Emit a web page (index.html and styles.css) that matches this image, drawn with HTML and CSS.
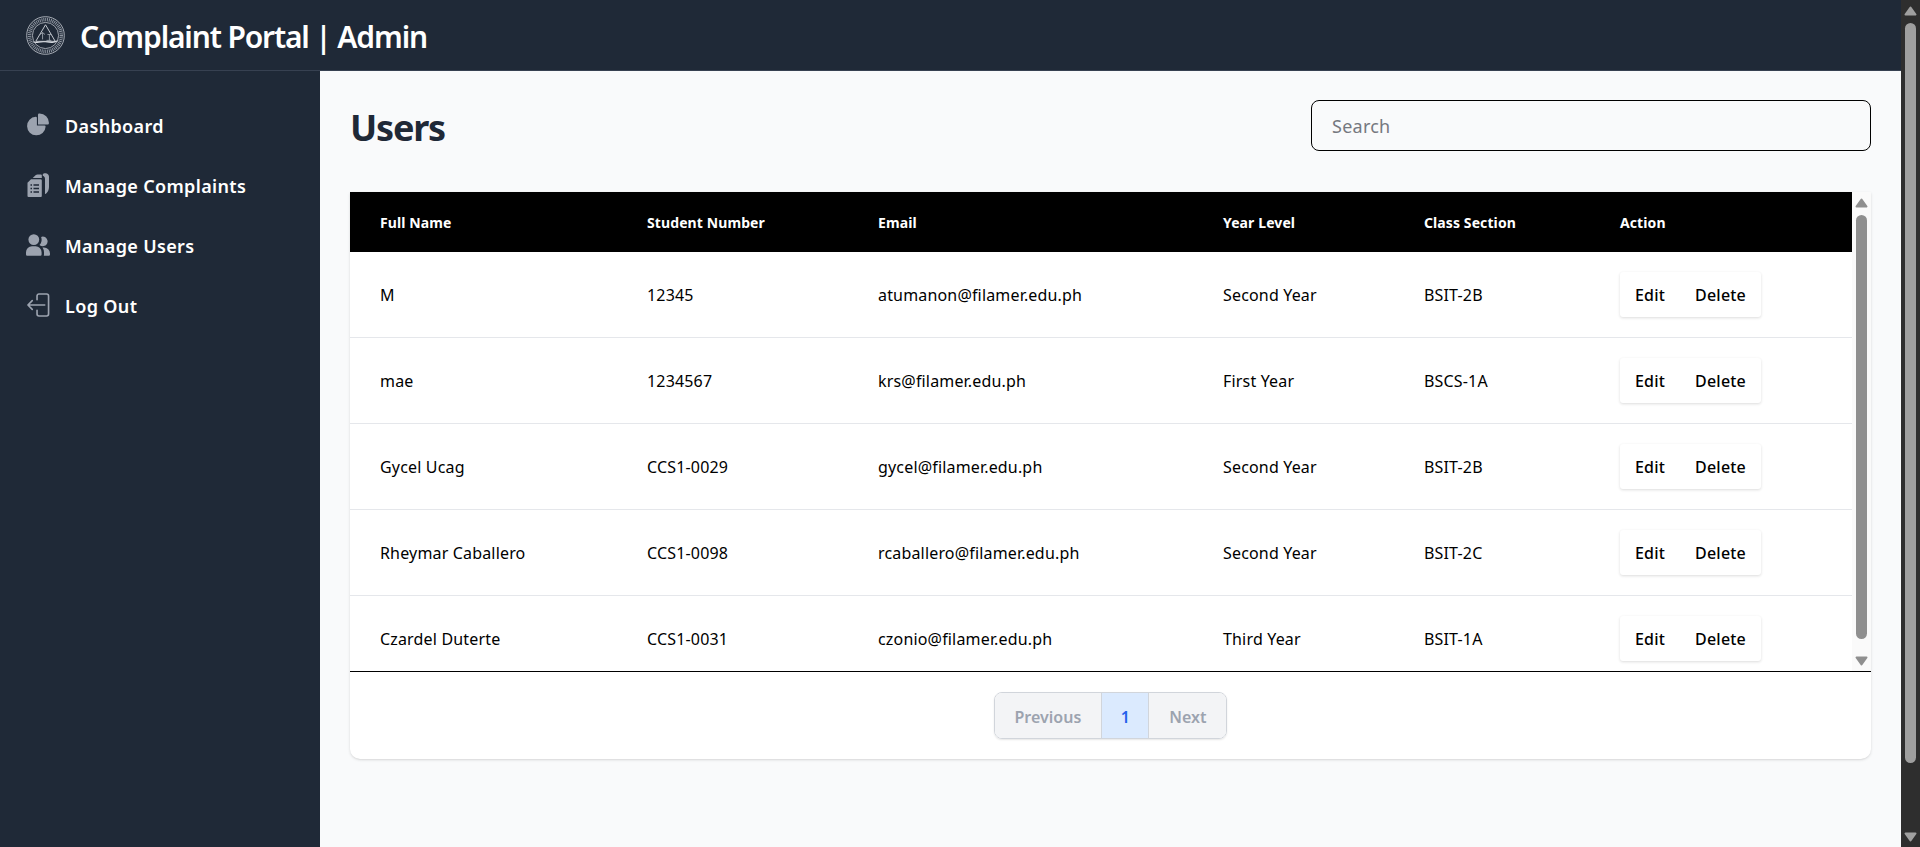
FILE: index.html
```html
<!DOCTYPE html>
<html lang="en">
<head>
<meta charset="utf-8">
<title>Complaint Portal | Admin</title>
<link rel="stylesheet" href="styles.css">
</head>
<body>
<div class="app">
  <header class="topbar">
    <svg class="logo" viewBox="0 0 40 40" aria-hidden="true">
      <circle cx="20" cy="20" r="19.300" fill="none" stroke="#b9bec6" stroke-width=".9"/>
      <circle cx="20" cy="20" r="16.300" fill="none" stroke="#8f96a1" stroke-width="3.600" stroke-dasharray="1 .9"/>
      <circle cx="20" cy="20" r="13.400" fill="none" stroke="#c4c8cf" stroke-width=".8"/>
      <path d="M20 9 30 26H10Z" fill="none" stroke="#c9cdd4" stroke-width="1"/>
      <path d="M17 24v-7M17 17l-2.500 2M17 17l2.500 2M22 19h4M24 19v6M21 25h5" fill="none" stroke="#aeb4bd" stroke-width=".8"/>
      <path d="M7.500 26.500c4 2 6-1 12.500 0s8 1 12.500-1" fill="none" stroke="#d5d9df" stroke-width="1.100"/>
    </svg>
    <span class="brand">Complaint Portal | Admin</span>
  </header>
  <div class="body-row">
    <aside class="sidebar">
      <a class="nav-item">
        <svg class="nav-icon" viewBox="0 0 22 21" aria-hidden="true"><path class="fill" d="M16.975 11H10V4.025a1 1 0 0 0-1.066-.998 8.5 8.5 0 1 0 9.039 9.039.999.999 0 0 0-1-1.066h.002Z"/><path class="fill" d="M12.5 0c-.157 0-.311.01-.565.027A1 1 0 0 0 11 1.02V10h8.975a1 1 0 0 0 1-.935c.013-.188.028-.374.028-.565A8.51 8.51 0 0 0 12.5 0Z"/></svg>
        <span>Dashboard</span>
      </a>
      <a class="nav-item">
        <svg class="nav-icon" viewBox="0 0 23 24" aria-hidden="true"><path class="fill" d="M4.500 6.200H14a1.300 1.300 0 0 1 1.300 1.300V23a1 1 0 0 1-1 1H2a1 1 0 0 1-1-1V9.700Z"/><path class="cut" d="M4 12h1.500M7 12h5.500M4 15.500h1.500M7 15.500h5.500M4 19h1.500M7 19h5.500"/><path class="fill" d="M6.200 5 9 2.200C9.600 1.600 10.300 1.400 11 1.400h3.200c.7 0 1.100.5 1.100 1.100V5Z"/><path class="fill" d="M16.300 1.200c.5-.7 2-1.200 3.200-.9 1.800.4 3 1.700 3 3.500V14c0 2.800-1.200 5.300-3.300 7-.3.200-.7 0-.7-.4V6c0-1.600-.7-2.700-2.200-3.200Z"/></svg>
        <span>Manage Complaints</span>
      </a>
      <a class="nav-item">
        <svg class="nav-icon" viewBox="0 0 20 18" aria-hidden="true"><path class="fill" d="M14 2a3.963 3.963 0 0 0-1.400.267 6.439 6.439 0 0 1-1.331 6.638A4 4 0 1 0 14 2Zm1 9h-1.264A6.957 6.957 0 0 1 15 15v2a2.970 2.970 0 0 1-.184 1H19a1 1 0 0 0 1-1v-1a5.006 5.006 0 0 0-5-5ZM6.500 9a4.500 4.500 0 1 0 0-9 4.500 4.500 0 0 0 0 9ZM8 10H5a5.006 5.006 0 0 0-5 5v2a1 1 0 0 0 1 1h11a1 1 0 0 0 1-1v-2a5.006 5.006 0 0 0-5-5Z"/></svg>
        <span>Manage Users</span>
      </a>
      <a class="nav-item">
        <svg class="nav-icon" viewBox="0 0 24 25" aria-hidden="true"><path class="line" d="M11 7V3a2 2 0 0 1 2-2h8a2 2 0 0 1 2 2v19a2 2 0 0 1-2 2h-8a2 2 0 0 1-2-2v-4"/><path class="line" d="M19 12.500H1.500M6 8 1.500 12.500 6 17"/></svg>
        <span>Log Out</span>
      </a>
    </aside>
    <main class="content">
      <div class="page-head">
        <h1 class="page-title">Users</h1>
        <input class="search" type="text" placeholder="Search">
      </div>
      <section class="card">
        <div class="table-wrap">
          <div class="table-clip">
            <table class="users">
              <colgroup>
                <col class="c-name"><col class="c-num"><col class="c-mail"><col class="c-year"><col class="c-sec"><col class="c-act">
              </colgroup>
              <thead>
                <tr><th>Full Name</th><th>Student Number</th><th>Email</th><th>Year Level</th><th>Class Section</th><th>Action</th></tr>
              </thead>
              <tbody>
                <tr><td>M</td><td>12345</td><td>atumanon@filamer.edu.ph</td><td>Second Year</td><td>BSIT-2B</td><td><div class="actions"><button class="act">Edit</button><button class="act">Delete</button></div></td></tr>
                <tr><td>mae</td><td>1234567</td><td>krs@filamer.edu.ph</td><td>First Year</td><td>BSCS-1A</td><td><div class="actions"><button class="act">Edit</button><button class="act">Delete</button></div></td></tr>
                <tr><td>Gycel Ucag</td><td>CCS1-0029</td><td>gycel@filamer.edu.ph</td><td>Second Year</td><td>BSIT-2B</td><td><div class="actions"><button class="act">Edit</button><button class="act">Delete</button></div></td></tr>
                <tr><td>Rheymar Caballero</td><td>CCS1-0098</td><td>rcaballero@filamer.edu.ph</td><td>Second Year</td><td>BSIT-2C</td><td><div class="actions"><button class="act">Edit</button><button class="act">Delete</button></div></td></tr>
                <tr><td>Czardel Duterte</td><td>CCS1-0031</td><td>czonio@filamer.edu.ph</td><td>Third Year</td><td>BSIT-1A</td><td><div class="actions"><button class="act">Edit</button><button class="act">Delete</button></div></td></tr>
              </tbody>
            </table>
          </div>
          <div class="vbar vbar-inner">
            <div class="vbar-btn up"><svg class="arrow" viewBox="0 0 13 10" aria-hidden="true"><path d="M6.500 1.500 11.500 8.500H1.500Z"/></svg></div>
            <div class="vbar-track"><div class="vbar-thumb"></div></div>
            <div class="vbar-btn down"><svg class="arrow" viewBox="0 0 13 10" aria-hidden="true"><path d="M1.500 1.500H11.500L6.500 8.500Z"/></svg></div>
          </div>
        </div>
        <div class="pager-row">
          <nav class="pager">
            <span class="page-btn">Previous</span>
            <span class="page-btn current">1</span>
            <span class="page-btn">Next</span>
          </nav>
        </div>
      </section>
    </main>
  </div>
</div>
<div class="vbar vbar-page">
  <div class="vbar-btn up"><svg class="arrow" viewBox="0 0 13 10" aria-hidden="true"><path d="M6.500 1.500 11.500 8.500H1.500Z"/></svg></div>
  <div class="vbar-track"><div class="vbar-thumb"></div></div>
  <div class="vbar-btn down"><svg class="arrow" viewBox="0 0 13 10" aria-hidden="true"><path d="M1.500 1.500H11.500L6.500 8.500Z"/></svg></div>
</div>
</body>
</html>
```

FILE: styles.css
```css
* { box-sizing: border-box; }

html { background: #f9fafb; }

body {
  display: flex;
  height: 847px;
  margin: 0;
  overflow: hidden;
  font-family: "Noto Sans", "Open Sans", "Liberation Sans", sans-serif;
  color: #000;
}

.app {
  display: flex;
  flex: 1;
  flex-direction: column;
  min-width: 0;
}

/* scrollbars */
.vbar {
  display: flex;
  flex: none;
  flex-direction: column;
  width: 19px;
}

.vbar-btn {
  display: flex;
  flex: none;
  justify-content: center;
  height: 19px;
}
.vbar-btn.up { padding-top: 6px; }
.vbar-btn.down { padding-top: 4px; }

.arrow { display: block; width: 13px; height: 10px; }
.arrow path { stroke-width: 2; stroke-linejoin: round; }

.vbar-track { flex: 1; padding: 4px; min-height: 0; }
.vbar-thumb { border-radius: 6px; }

.vbar-page { background: #2e2e2e; }
.vbar-page .arrow path { fill: #9f9f9f; stroke: #9f9f9f; }
.vbar-page .vbar-thumb { height: 740px; background: #9f9f9f; }

.vbar-inner { background: #fafafa; }
.vbar-inner .arrow path { fill: #8f8f8f; stroke: #8f8f8f; }
.vbar-inner .vbar-thumb { height: 424px; background: #8f8f8f; }

/* top bar */
.topbar {
  display: flex;
  flex: none;
  align-items: center;
  gap: 15px;
  height: 71px;
  padding-left: 26px;
  background: #1f2937;
  border-bottom: 1px solid #374151;
}

.logo { width: 39px; height: 39px; flex: none; }

.brand {
  padding-top: 3px;
  color: #fff;
  font-size: 30px;
  font-weight: 600;
  line-height: 36px;
  letter-spacing: -1.15px;
}

.body-row { display: flex; flex: 1; min-height: 0; }

/* sidebar */
.sidebar {
  width: 320px;
  flex: none;
  padding-top: 24px;
  background: #1f2937;
}

.nav-item {
  display: flex;
  align-items: center;
  gap: 15px;
  height: 60px;
  padding-left: 26px;
  color: #fff;
  font-size: 18px;
  font-weight: 600;
  letter-spacing: .35px;
}
.nav-item span { padding-top: 2px; }

.nav-icon { width: 24px; height: 24px; flex: none; }
.nav-icon .fill { fill: #9ca3af; }
.nav-icon .cut { fill: none; stroke: #1f2937; stroke-width: 1.600; }
.nav-icon .line {
  fill: none;
  stroke: #9ca3af;
  stroke-width: 1.700;
  stroke-linecap: round;
  stroke-linejoin: round;
}

/* main */
.content {
  flex: 1;
  min-width: 0;
  padding: 29px 30px 0;
  background: #f9fafb;
}

.page-head {
  display: flex;
  align-items: center;
  justify-content: space-between;
  height: 51px;
  margin-bottom: 41px;
}

.page-title {
  margin: 0;
  padding-top: 4px;
  color: #1f2937;
  font-size: 36px;
  font-weight: 700;
  line-height: 40px;
  letter-spacing: -1.2px;
}

.search {
  width: 560px;
  height: 51px;
  padding: 0 20px;
  background: transparent;
  border: 1px solid #000;
  border-radius: 8px;
  font: inherit;
  font-size: 18px;
  letter-spacing: .25px;
  outline: none;
}
.search::placeholder { color: #75787f; }

.card {
  background: #fff;
  border-radius: 0 0 10px 10px;
  box-shadow: 0 1px 3px rgba(0, 0, 0, .12), 0 1px 2px -1px rgba(0, 0, 0, .1);
}

.table-wrap {
  display: flex;
  height: 480px;
  border-bottom: 1px solid #000;
}

.table-clip {
  flex: 1;
  min-width: 0;
  overflow: hidden;
}

.users {
  width: 100%;
  table-layout: fixed;
  border-collapse: collapse;
}

.c-name { width: 267px; }
.c-num { width: 231px; }
.c-mail { width: 345px; }
.c-year { width: 201px; }
.c-sec { width: 196px; }

.users th {
  height: 60px;
  padding: 0 30px;
  background: #000;
  color: #fff;
  font-size: 14px;
  font-weight: 700;
  letter-spacing: .1px;
  text-align: left;
}

.users td {
  padding: 20px 30px;
  font-size: 16px;
  line-height: 24px;
  letter-spacing: .17px;
  white-space: nowrap;
}

.users tbody tr { border-bottom: 1px solid #e5e7eb; }

.actions {
  display: inline-flex;
  vertical-align: top;
  background: #fff;
  border-radius: 3px;
  box-shadow: 0 1px 3px rgba(0, 0, 0, .14);
}

.act {
  height: 45px;
  padding: 0 15px;
  background: transparent;
  border: 0;
  color: #000;
  font: inherit;
  font-size: 16px;
  font-weight: 500;
  letter-spacing: .2px;
}

.pager-row {
  display: flex;
  justify-content: center;
  padding: 20px 0;
}

.pager {
  display: flex;
  overflow: hidden;
  height: 47px;
  border: 1px solid #d1d5db;
  border-radius: 8px;
  box-shadow: 0 1px 2px rgba(0, 0, 0, .1);
  font-size: 16px;
  font-weight: 600;
  line-height: 49px;
}

.page-btn {
  padding: 0 20px;
  background: #f3f4f6;
  color: #9ca3af;
}

.page-btn.current {
  width: 48px;
  padding: 0;
  background: #dbeafe;
  color: #2563eb;
  border-left: 1px solid #d1d5db;
  border-right: 1px solid #d1d5db;
  text-align: center;
}
```
